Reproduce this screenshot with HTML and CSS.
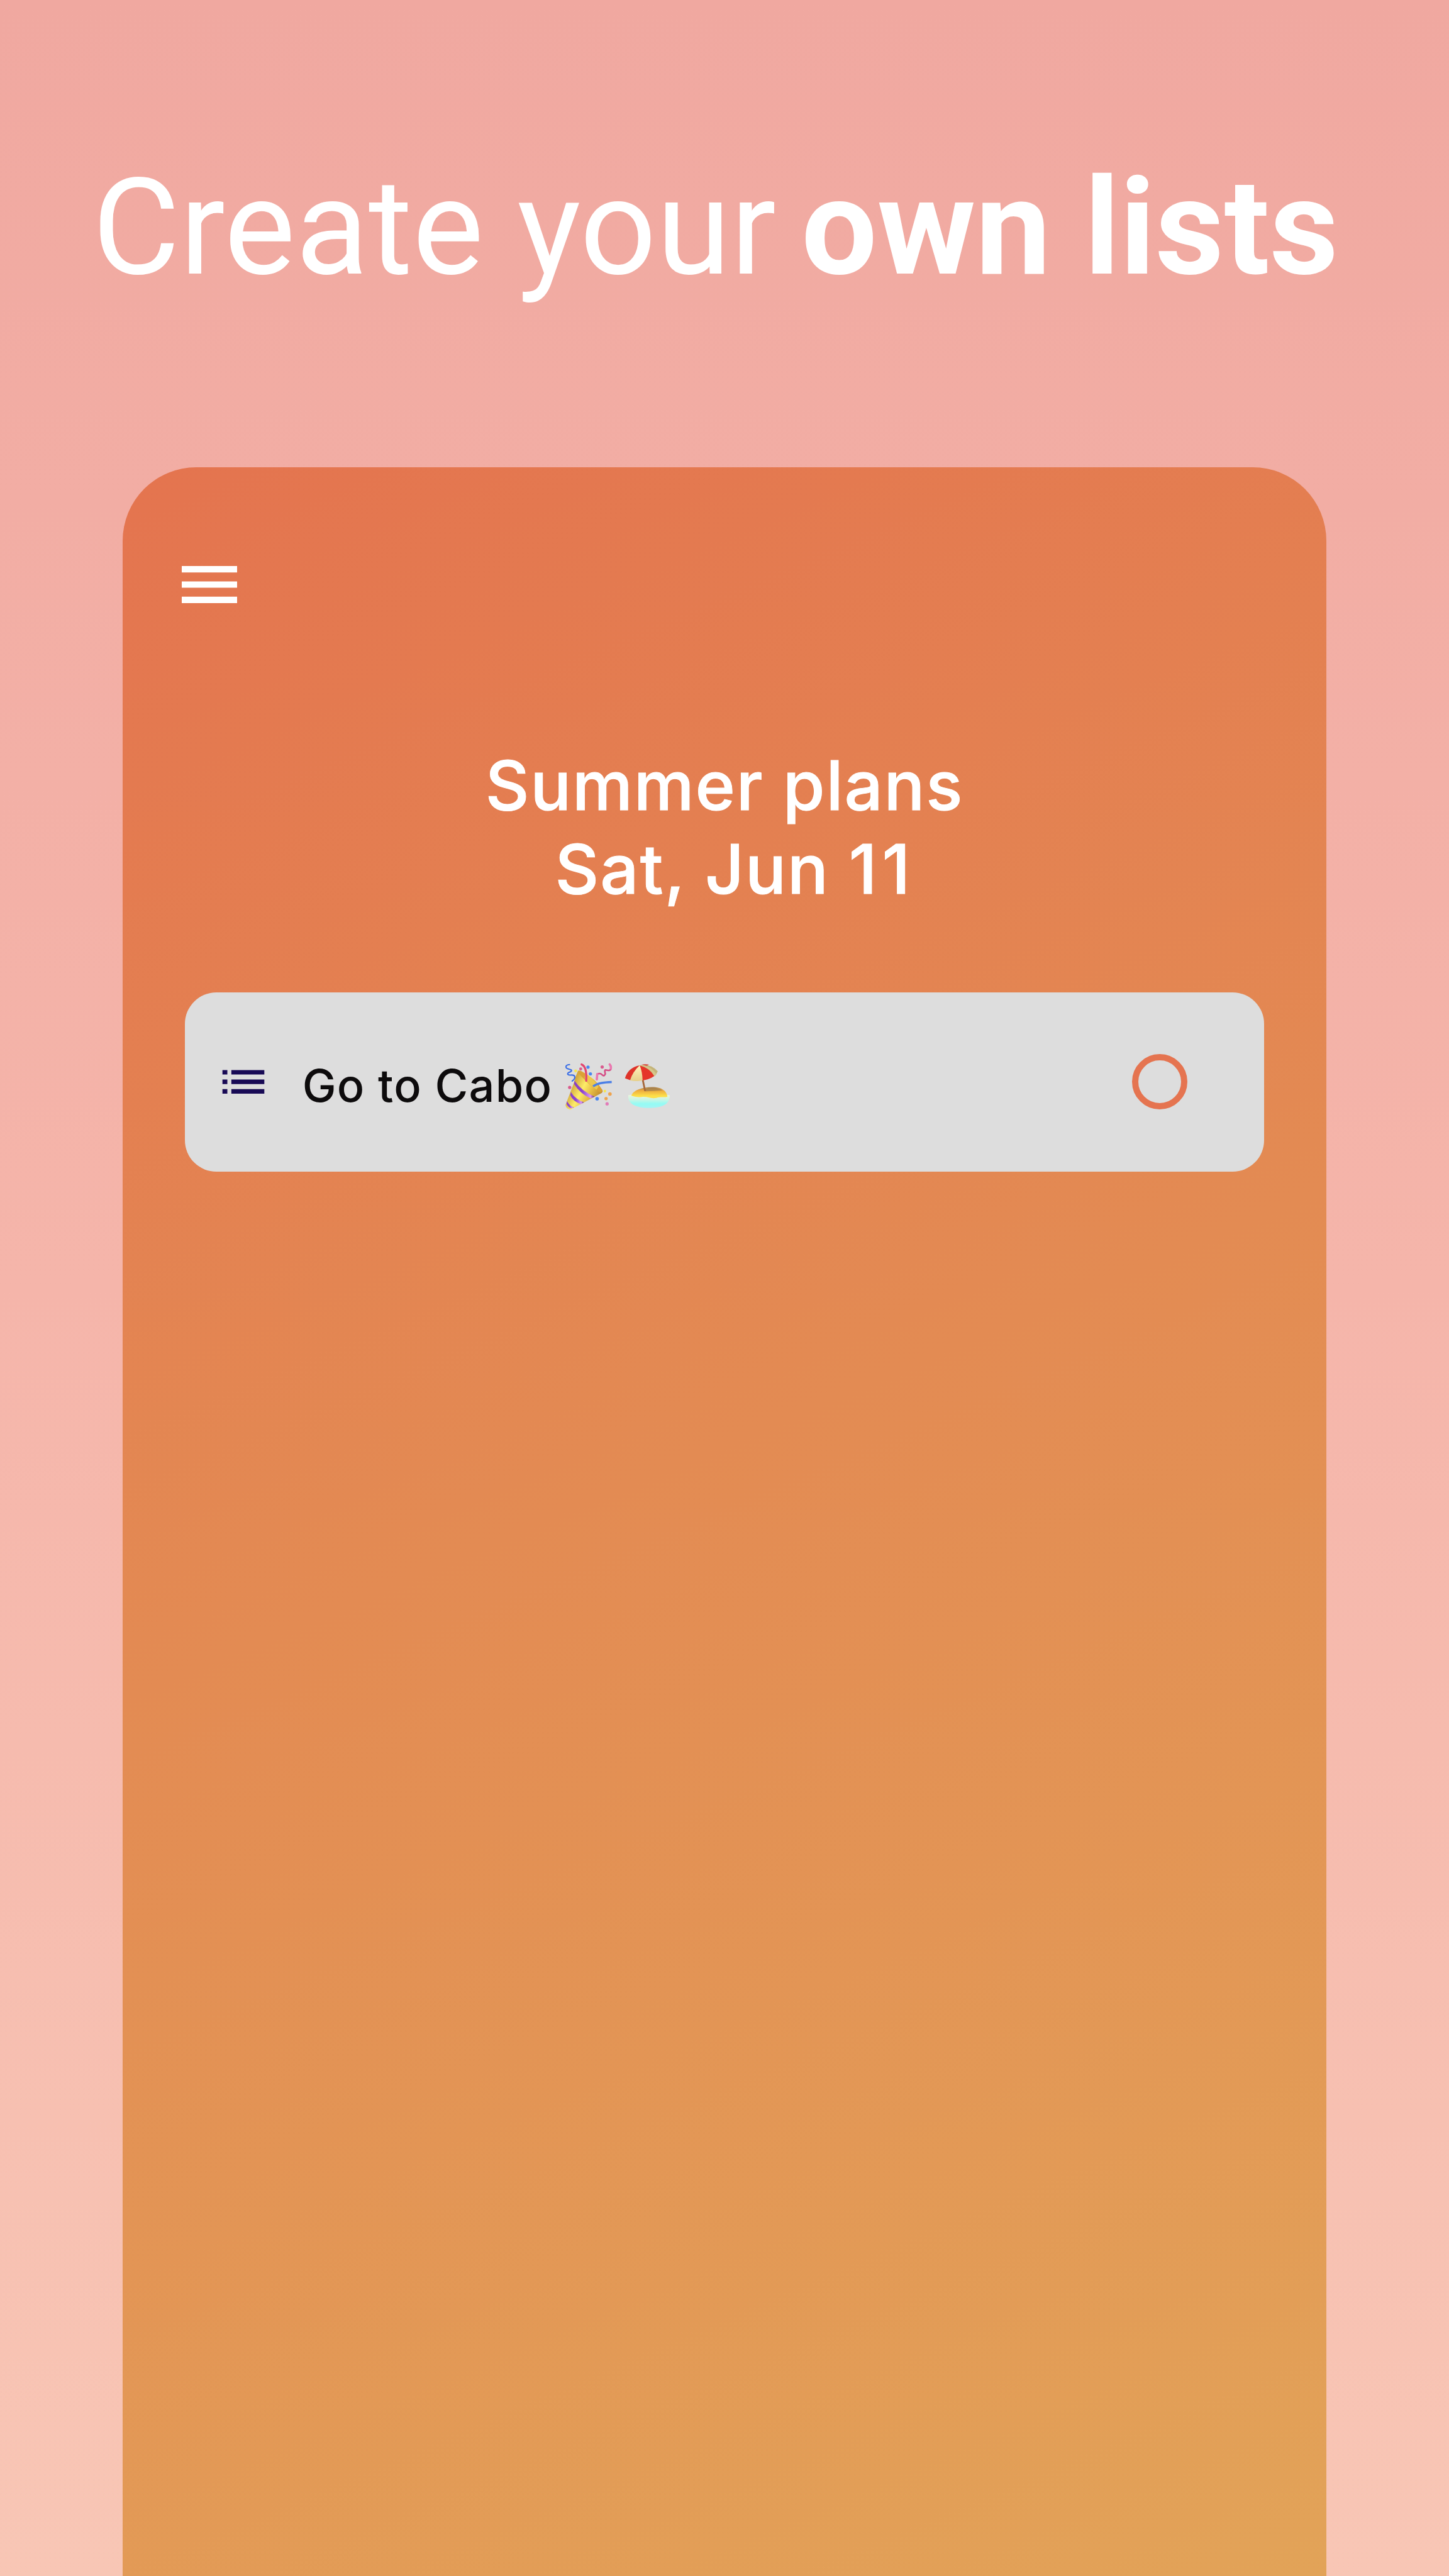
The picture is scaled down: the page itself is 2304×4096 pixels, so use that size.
FILE: index.html
```html
<!DOCTYPE html>
<html lang="en">
<head>
<meta charset="utf-8">
<title>Lists</title>
<link rel="stylesheet" href="styles.css">
</head>
<body>
<main class="page">
  <h1 class="headline"><span class="headline-light">Create your</span><strong class="headline-bold">own lists</strong></h1>
  <section class="phone">
    <svg class="menu" viewBox="0 0 124 83" fill="#fff"><path d="M0 0h124v14.500H0zM0 34.500h124v14H0zM0 68.500h124v14.500H0z"/></svg>
    <header class="list-head">
      <h2 class="list-title">Summer plans</h2>
      <p class="list-date">Sat, Jun <span class="day">11</span></p>
    </header>
    <article class="task">
      <svg class="list-icon" viewBox="0 0 96 55" fill="#180a55"><path d="M1 0.500h11v10H1zM21 0.500h74v10H21zM1 22h11v10H1zM21 22h74v10H21zM1 43.500h11v10H1zM21 43.500h74v10H21z"/></svg>
      <span class="task-text">Go to Cabo</span>
      <svg class="emoji" viewBox="125 105 710 320">
        <defs>
          <linearGradient id="cone" x1="0" y1="0" x2="1" y2=".55"><stop offset="0" stop-color="#c69632"/><stop offset=".3" stop-color="#d3a83f"/><stop offset=".55" stop-color="#fdec68"/><stop offset=".75" stop-color="#e6bd46"/><stop offset="1" stop-color="#c08a2c"/></linearGradient>
          <linearGradient id="band"><stop offset="0" stop-color="#8a3fc4"/><stop offset=".4" stop-color="#8d45cf"/><stop offset=".8" stop-color="#d99af5"/><stop offset="1" stop-color="#5c1f78"/></linearGradient>
          <linearGradient id="sand" x1="0" y1="0" x2="0" y2="1"><stop offset="0" stop-color="#a8824e"/><stop offset=".3" stop-color="#edab3f"/><stop offset=".8" stop-color="#fde04a"/></linearGradient>
          <linearGradient id="sea" x1="0" y1="0" x2="0" y2="1"><stop offset="0" stop-color="#f4f3dc"/><stop offset=".4" stop-color="#c9f5e4"/><stop offset=".7" stop-color="#93fbf4"/><stop offset="1" stop-color="#a5f4f4"/></linearGradient>
          <linearGradient id="cream" x1="0" y1="0" x2="0" y2="1"><stop offset="0" stop-color="#fff3bd"/><stop offset="1" stop-color="#e6d08a"/></linearGradient>
        </defs>
        <path d="M214 162 Q196 200 188 240 L130 392 Q134 420 163 423 L184 412 L372 312 Q384 302 376 290 Q330 210 240 166 Q224 158 214 162z" fill="url(#cone)"/>
        <path d="M214 166 Q224 160 246 172 Q336 222 378 294 Q376 306 360 306 Q300 270 260 222 Q222 190 214 166z" fill="#dba136"/>
        <path d="M262 182 Q320 215 352 268 L338 290 Q285 256 258 214z" fill="#edc84f"/>
        <path d="M190 228 Q238 300 326 336 L298 347 Q228 316 187 250z" fill="url(#band)"/>
        <path d="M166 304 Q194 352 254 374 L232 386 Q180 366 162 326z" fill="url(#band)"/>
        <path d="M140 366 Q156 396 186 408 L168 415 Q142 402 137 382z" fill="url(#band)"/>
        <g fill="none" stroke-linecap="round">
          <path d="M157 121C124 124 128 147 153 151C182 157 171 168 150 175C138 184 146 193 170 191C200 190 198 215 175 231" stroke="#3a6ee6" stroke-width="9"/>
          <path d="M238 120Q274 132 269 230" stroke="#e2446f" stroke-width="14"/>
          <path d="M340 221L343 184Q365 176 374 188Q388 204 397 184Q390 156 398 157Q436 165 434 147Q438 132 426 119" stroke="#d54e86" stroke-width="11"/>
          <path d="M340 220L343 184M434 147Q438 132 426 119" stroke="#ea78b0" stroke-width="15"/>
          <path d="M315 267Q350 240 440 238" stroke="#4b7fe6" stroke-width="15" stroke-linecap="butt"/>
        </g>
        <g fill="#4b86f0"><circle cx="281" cy="138" r="11"/><circle cx="297" cy="183" r="11"/><circle cx="342" cy="350" r="12"/></g>
        <g fill="#d95a8e"><circle cx="376" cy="137" r="11"/><circle cx="158" cy="274" r="11"/><circle cx="232" cy="150" r="10"/></g>
        <g fill="#eea34d"><circle cx="428" cy="318" r="12"/><circle cx="402" cy="349" r="11"/></g>
        <circle cx="409" cy="384" r="11" fill="#e27bb8"/>
        <g fill="#f6e653"><circle cx="198" cy="163" r="10"/><circle cx="394" cy="299" r="9"/></g>
        <path d="M551 325C545 390 610 412 690 412S833 390 829 325Q690 310 551 325z" fill="url(#sea)"/>
        <path d="M572 330C580 296 640 272 710 272S808 300 814 336C790 344 775 334 740 344C700 352 680 332 640 338Q600 342 572 330z" fill="url(#sand)"/>
        <path d="M662 285Q720 262 782 294Q724 300 662 300z" fill="#997b4e" opacity=".65"/>
        <path d="M648 222L664 298" stroke="#a5683b" stroke-width="12"/>
        <path d="M628 126Q700 112 749 166L732 196L705 192z" fill="#c4b47a"/>
        <path d="M640 122Q662 114 690 121L674 130z" fill="#d8564a"/>
        <path d="M628 126Q550 140 529 213L566 226Q590 170 628 126z" fill="#de3329"/>
        <path d="M628 126Q582 166 563 226Q600 238 648 226Q650 170 628 126z" fill="url(#cream)"/>
        <path d="M628 126Q646 170 647 227Q690 222 726 198Q700 148 628 126z" fill="#e5362a"/>
        <path d="M628 126Q690 136 726 198L740 186Q714 140 650 124z" fill="#d4c78b"/>
      </svg>
      <span class="check"></span>
    </article>
  </section>
</main>
</body>
</html>
```
FILE: styles.css
```css
* { box-sizing: border-box; margin: 0; padding: 0; }
body { width: 2304px; height: 4096px; overflow: hidden; }
.page {
  width: 2304px;
  height: 4096px;
  display: flex;
  flex-direction: column;
  align-items: center;
  overflow: hidden;
  background: linear-gradient(180deg, #f0a8a0 0%, #f5b5aa 50%, #f8c6b5 100%);
}
.headline {
  width: 100%;
  height: 743px;
  flex: none;
  padding: 237px 0 0 147px;
  display: flex;
  gap: 40px;
  font-family: Roboto, sans-serif;
  font-size: 213.33px;
  line-height: 250px;
  font-weight: 400;
  color: #fff;
  white-space: nowrap;
}
.headline-light { letter-spacing: 0.2px; }
.headline-bold { font-weight: 700; }
.phone {
  width: 1913.6px;
  height: 3353px;
  flex: none;
  padding: 157px 98.500px 0;
  border-radius: 117px 117px 0 0;
  background: linear-gradient(157deg, #e4744f 0%, #e38b53 47%, #e2a358 100%);
  font-family: Inter, sans-serif;
}
.menu { display: block; width: 88.2px; height: 59px; margin-left: -5px; }
.list-head {
  margin-top: 223px;
  text-align: center;
  color: #fff;
}
.list-title, .list-date {
  font-size: 108px;
  line-height: 133px;
  font-weight: 500;
  letter-spacing: 1.8px;
  -webkit-text-stroke: 1px #fff;
  white-space: nowrap;
}
.list-date { padding-left: 34px; letter-spacing: 2px; }
.day { letter-spacing: 8px; }
.task {
  height: 285px;
  margin-top: 129.500px;
  padding: 0 122px 0 59px;
  border-radius: 50px;
  display: flex;
  align-items: center;
  background: #ddd;
}
.list-icon { width: 68px; height: 39px; }
.task-text {
  margin: 12px 0 0 60px;
  width: 417px;
  font-size: 72px;
  line-height: 88px;
  font-weight: 500;
  letter-spacing: 1.3px;
  color: #0d0b0c;
  white-space: nowrap;
}
.emoji { width: 168.3px; height: 75.9px; margin-top: 14px; }
.check {
  width: 88.5px;
  height: 88.5px;
  margin-left: auto;
  border: 10px solid #e57450;
  border-radius: 50%;
}
```
